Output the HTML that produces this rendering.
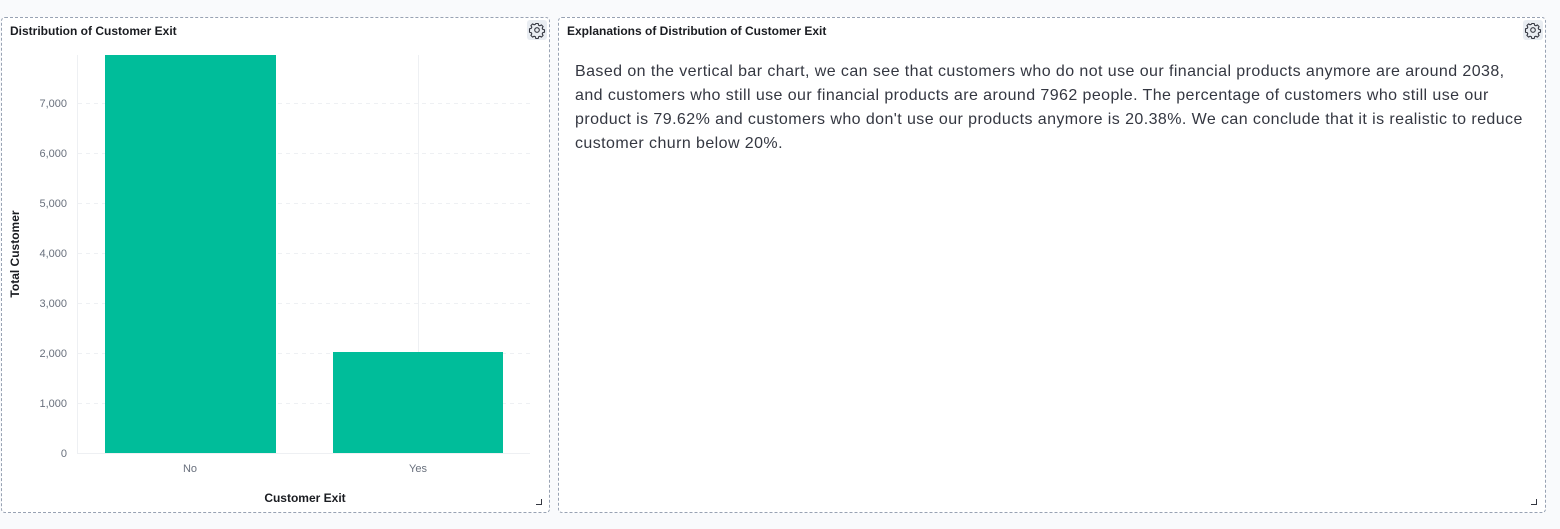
<!DOCTYPE html>
<html><head><style>
body{margin:0;width:1560px;height:529px;background:#f9fafc;font-family:"Liberation Sans",sans-serif;position:relative;overflow:hidden}
.panel{position:absolute;background:#fff;border:1px dashed #98a2b3;border-radius:4px;box-sizing:border-box}
.title{position:absolute;left:8px;top:6px;font-size:12px;font-weight:bold;color:#1a1c21}
.gear{position:absolute;width:20px;height:20px;background:#e9edf2;border-radius:3px}
.rz{position:absolute;width:5px;height:5px;border-right:1.5px solid #343741;border-bottom:1.5px solid #343741}
.yl{position:absolute;font-size:11px;color:#69707d;right:0;text-align:right}
.txt{position:absolute;left:575px;top:60px;font-size:16px;line-height:24px;color:#343741;letter-spacing:0.42px;white-space:nowrap}
</style></head><body>
<div class="panel" style="left:1px;top:17px;width:549px;height:496px">
<div class="title">Distribution of Customer Exit</div>
<div class="gear" style="left:525px;top:2px"><svg width="20" height="20" viewBox="0 0 20 20"><circle cx="10" cy="10" r="2.3" fill="none" stroke="#343741" stroke-width="1.1"/><path d="M8.8 3.5h2.4l.4 1.7 1.3.6 1.5-.9 1.7 1.7-.9 1.5.6 1.3 1.7.4v2.4l-1.7.4-.6 1.3.9 1.5-1.7 1.7-1.5-.9-1.3.6-.4 1.7H8.8l-.4-1.7-1.3-.6-1.5.9-1.7-1.7.9-1.5-.6-1.3-1.7-.4V8.8l1.7-.4.6-1.3-.9-1.5 1.7-1.7 1.5.9 1.3-.6z" fill="none" stroke="#343741" stroke-width="1.1" stroke-linejoin="round"/></svg></div>
<div class="rz" style="left:534px;top:481px"></div>
</div>
<div class="panel" style="left:558px;top:17px;width:988px;height:496px">
<div class="title">Explanations of Distribution of Customer Exit</div>
<div class="gear" style="left:964px;top:2px"><svg width="20" height="20" viewBox="0 0 20 20"><circle cx="10" cy="10" r="2.3" fill="none" stroke="#343741" stroke-width="1.1"/><path d="M8.8 3.5h2.4l.4 1.7 1.3.6 1.5-.9 1.7 1.7-.9 1.5.6 1.3 1.7.4v2.4l-1.7.4-.6 1.3.9 1.5-1.7 1.7-1.5-.9-1.3.6-.4 1.7H8.8l-.4-1.7-1.3-.6-1.5.9-1.7-1.7.9-1.5-.6-1.3-1.7-.4V8.8l1.7-.4.6-1.3-.9-1.5 1.7-1.7 1.5.9 1.3-.6z" fill="none" stroke="#343741" stroke-width="1.1" stroke-linejoin="round"/></svg></div>
<div class="rz" style="left:972px;top:481px"></div>
</div>
<svg style="position:absolute;left:0;top:0" width="560" height="529">
<g stroke="#eef0f3" stroke-dasharray="4 4" stroke-width="1">
<line x1="78" x2="530" y1="103.5" y2="103.5"/><line x1="78" x2="530" y1="153.5" y2="153.5"/><line x1="78" x2="530" y1="203.5" y2="203.5"/><line x1="78" x2="530" y1="253.5" y2="253.5"/><line x1="78" x2="530" y1="303.5" y2="303.5"/><line x1="78" x2="530" y1="353.5" y2="353.5"/><line x1="78" x2="530" y1="403.5" y2="403.5"/>
</g>
<line x1="418.5" x2="418.5" y1="55" y2="453" stroke="#eef0f3"/>
<line x1="77.5" x2="77.5" y1="55" y2="454" stroke="#eef0f3"/>
<line x1="77" x2="530" y1="453.5" y2="453.5" stroke="#eef0f3"/>
<rect x="105" y="55" width="171" height="398" fill="#00bd9a"/>
<rect x="333" y="352" width="170" height="101" fill="#00bd9a"/>
<g font-size="11" fill="#69707d" text-anchor="end" font-family="Liberation Sans">
<text x="67" y="107">7,000</text><text x="67" y="157">6,000</text><text x="67" y="207">5,000</text><text x="67" y="257">4,000</text><text x="67" y="307">3,000</text><text x="67" y="357">2,000</text><text x="67" y="407">1,000</text><text x="67" y="457">0</text>
</g>
<g font-size="11" fill="#69707d" text-anchor="middle" font-family="Liberation Sans">
<text x="190" y="472">No</text><text x="418" y="472">Yes</text>
</g>
<text x="305" y="502" font-size="12" font-weight="bold" fill="#1a1c21" text-anchor="middle" font-family="Liberation Sans">Customer Exit</text>
<text transform="translate(19,254) rotate(-90)" font-size="12" font-weight="bold" fill="#1a1c21" text-anchor="middle" font-family="Liberation Sans">Total Customer</text>
</svg>
<div class="txt">Based on the vertical bar chart, we can see that customers who do not use our financial products anymore are around 2038,<br>and customers who still use our financial products are around 7962 people. The percentage of customers who still use our<br>product is 79.62% and customers who don't use our products anymore is 20.38%. We can conclude that it is realistic to reduce<br>customer churn below 20%.</div>
</body></html>
